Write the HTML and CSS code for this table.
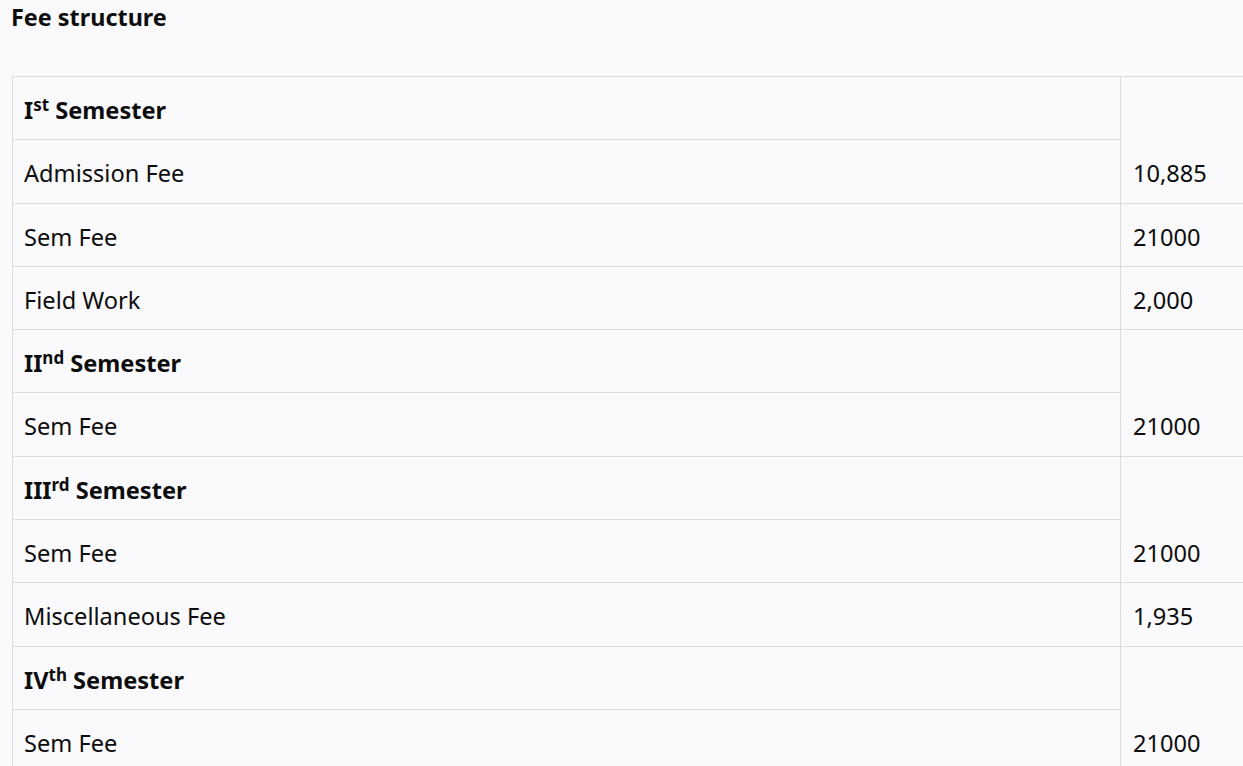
FILE: index.html
```html
<!DOCTYPE html>
<html>
<head>
<meta charset="utf-8">
<link rel="stylesheet" href="styles.css">
</head>
<body>
<h4 class="title">Fee structure</h4>
<table class="fees">
<colgroup><col class="c-label"><col class="c-amt"></colgroup>
<tr><td class="sem">I<sup>st</sup> Semester</td><td class="amt" rowspan="2">10,885</td></tr>
<tr><td>Admission Fee</td></tr>
<tr><td>Sem Fee</td><td class="amt">21000</td></tr>
<tr><td>Field Work</td><td class="amt">2,000</td></tr>
<tr><td class="sem">II<sup>nd</sup> Semester</td><td class="amt" rowspan="2">21000</td></tr>
<tr><td>Sem Fee</td></tr>
<tr><td class="sem">III<sup>rd</sup> Semester</td><td class="amt" rowspan="2">21000</td></tr>
<tr><td>Sem Fee</td></tr>
<tr><td>Miscellaneous Fee</td><td class="amt">1,935</td></tr>
<tr><td class="sem">IV<sup>th</sup> Semester</td><td class="amt" rowspan="2">21000</td></tr>
<tr><td>Sem Fee</td></tr>
</table>
</body>
</html>
```
FILE: styles.css
```css
html, body {
  margin: 0;
  padding: 0;
  overflow: hidden;
  background: #faf9fb;
}
body {
  font-family: "Noto Sans", "Open Sans", sans-serif;
  color: #0d0d0d;
  padding: 0 0 0 12px;
}
.title {
  margin: 0;
  padding-top: 3px;
  font-size: 23.4px;
  font-weight: 700;
  line-height: 28px;
  margin-left: -1px;
}
.fees {
  margin-top: 45px;
  border-collapse: collapse;
  table-layout: fixed;
  width: 1250px;
  font-size: 23.6px;
}
.c-label {
  width: 1108px;
}
.c-amt {
  width: 142px;
}
.fees td {
  border: 1px solid #dddbe0;
  padding: 18px 11px 14.3px 11px;
  line-height: 30px;
  vertical-align: bottom;
  white-space: nowrap;
}
.fees td.amt {
  padding-left: 12px;
}
.fees td.sem {
  font-weight: 700;
}
.fees sup {
  font-size: 0.72em;
  line-height: 0;
  vertical-align: 0.45em;
}
```
